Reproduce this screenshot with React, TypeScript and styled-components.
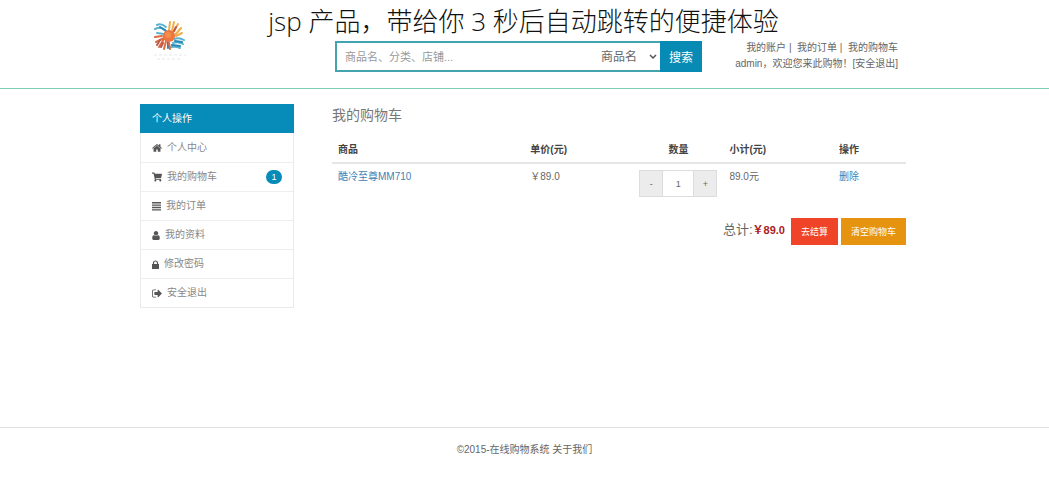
import React from 'react';
import styled, { createGlobalStyle } from 'styled-components';
import { FaShoppingCart } from 'react-icons/fa';

const GlobalStyle = createGlobalStyle`
  *, *::before, *::after { box-sizing: border-box; }
  body {
    margin: 0;
    background: #fff;
    color: #666;
    font-family: "Liberation Sans", "Noto Sans CJK SC", sans-serif;
    font-size: 10px;
    line-height: 16px;
  }
  button, input, select { font-family: inherit; border-radius: 0; margin: 0; }
`;

const Page = styled.div`
  position: relative;
  min-height: 100vh;
  display: flex;
  flex-direction: column;
`;

const Caption = styled.h1`
  position: absolute;
  top: 4px;
  left: 0;
  right: 2px;
  margin: 0;
  text-align: center;
  color: #111;
  font-family: "Open Sans", "Noto Sans CJK SC", sans-serif;
  font-size: 26px;
  font-weight: 300;
  line-height: 34px;
  pointer-events: none;
`;

const Header = styled.header`
  display: grid;
  grid-template-columns: 195px minmax(0, 367px) 1fr;
  align-items: start;
  height: 89px;
  padding: 0 151px 0 140px;
  border-bottom: 1px solid #7fcdb5;
`;

const Logo = styled.a`
  display: block;
  padding: 18px 0 0 11px;
  svg { display: block; }
`;

const SearchForm = styled.form`
  display: flex;
  height: 31px;
  margin-top: 41px;
`;

const SearchInput = styled.input`
  flex: 1;
  min-width: 0;
  padding: 0 8px;
  border: 2px solid #43a3ae;
  border-right: 0;
  color: #666;
  font-size: 11px;
  outline: 0;
  &::placeholder { color: #999; opacity: 1; }
`;

const SelectWrap = styled.label`
  position: relative;
  width: 74px;
  svg { position: absolute; right: 3px; top: 12px; pointer-events: none; }
`;

const SearchSelect = styled.select`
  appearance: none;
  width: 100%;
  height: 100%;
  padding: 1px 12px 0 15px;
  border: solid #43a3ae;
  border-width: 2px 0;
  background: #fff;
  color: #666;
  font-size: 12px;
`;

const SearchButton = styled.button`
  width: 42px;
  padding: 0;
  border: 1px solid #078bb4;
  background: #078bb4;
  color: #fff;
  font-size: 12px;
`;

const Account = styled.nav`
  padding-top: 40px;
  text-align: right;
  white-space: nowrap;
  a { color: inherit; text-decoration: none; }
`;

const Body = styled.div`
  flex: 1;
  display: grid;
  grid-template-columns: 154px minmax(0, 1fr);
  gap: 38px;
  align-items: start;
  padding: 15px 143px 24px 140px;
`;

const Menu = styled.nav`
  border: 1px solid #eaeaea;
  border-top: 0;
`;

const MenuTitle = styled.h2`
  margin: 0 -1px;
  padding: 0 12px;
  background: #078bb8;
  color: #fff;
  font-size: 10px;
  font-weight: 400;
  line-height: 29px;
`;

const MenuLink = styled.a`
  display: flex;
  align-items: center;
  gap: 5px;
  height: 29px;
  padding: 0 11px;
  color: #888;
  text-decoration: none;
  & + & { border-top: 1px solid #eee; }
  svg { flex: none; color: #555; fill: currentColor; }
`;

const Badge = styled.span`
  margin-left: auto;
  width: 16px;
  border-radius: 8px;
  background: #078bb8;
  color: #fff;
  font-size: 9px;
  line-height: 14px;
  text-align: center;
`;

const Heading = styled.h2`
  margin: 0 0 16px;
  color: #777;
  font-size: 14px;
  font-weight: 400;
  line-height: 22px;
`;

const CartTable = styled.table`
  width: 100%;
  table-layout: fixed;
  border-collapse: collapse;
`;

const HeadCell = styled.th<{ $width: string; $center?: boolean }>`
  width: ${(p) => p.$width};
  padding: 0 6px 4px;
  border-bottom: 2px solid #e6e6e6;
  color: #444;
  text-align: ${(p) => (p.$center ? 'center' : 'left')};
`;

const Cell = styled.td`
  padding: 6px 6px 0;
  vertical-align: top;
  line-height: 14px;
`;

const TextLink = styled.a`
  color: #3f7fb5;
  text-decoration: none;
`;

const Stepper = styled.div`
  display: flex;
  width: 78px;
  height: 27px;
  border: 1px solid #ddd;
`;

const StepButton = styled.button`
  width: 22px;
  padding: 0;
  border: 0;
  background: #ececec;
  color: #666;
  font-size: 9px;
`;

const StepInput = styled.input`
  flex: 1;
  min-width: 0;
  padding: 0;
  border: solid #ddd;
  border-width: 0 1px;
  color: #666;
  font-size: 9px;
  text-align: center;
`;

const Summary = styled.div`
  display: flex;
  justify-content: flex-end;
  align-items: center;
  gap: 3px;
  margin-top: 21px;
`;

const Total = styled.p`
  margin: 0 3px 3px 0;
  font-size: 13px;
  strong { color: #a8201f; font-size: 11px; }
`;

const ActionButton = styled.button<{ $color: string }>`
  height: 27px;
  padding: 0 9px;
  border: 1px solid ${(p) => p.$color};
  background: ${(p) => p.$color};
  color: #fff;
  font-size: 9px;
`;

const Footer = styled.footer`
  height: 73px;
  padding-top: 14px;
  border-top: 1px solid #e2e2e2;
  text-align: center;
  a { color: inherit; text-decoration: none; }
`;

const LogoMark = () => (
  <svg width="38" height="44" viewBox="0 0 38 44" role="img" aria-label="在线购物系统">
    <g fill="none" strokeLinecap="round" strokeWidth="2">
      <path stroke="#58b3d1" d="M6 7q4-2 9 2M4 11q6-3 10 1M6 15l7 1M23 21q5-2 10 1M22 25q5-2 10 1M20 29q5-1 9 1" />
      <path stroke="#2787b5" d="M9 9l6 4M24 23l7 1M21 27l8 1M17 24v6" />
      <path stroke="#efad4c" d="M19 4l-1 8M23 4l-2 9M27 6l-5 9M30 10l-6 7M31 15l-6 3" />
      <path stroke="#df6b43" d="M4 19l7-1M5 24l8-4M8 29l5-8M13 31l2-8M19 31l-1-6" />
      <path stroke="#b95b4d" d="M6 27l3-5M10 29l2-4M25 9l-2 4" />
    </g>
    <circle cx="18" cy="18" r="6" fill="#ee7540" />
    <circle cx="17" cy="17" r="3" fill="#f58e48" />
    <path d="M3 37h32M6 41h25" stroke="#e4eaec" strokeDasharray="3 2" />
  </svg>
);

const HomeIcon = () => (
  <svg width="10" height="10" viewBox="64 128 1664 1536" aria-hidden="true">
    <path d="M1472 992v480q0 26-19 45t-45 19h-384v-384h-256v384h-384q-26 0-45-19t-19-45v-480q0-1 .5-3t.5-3l575-474 575 474q1 2 1 6zm223-69l-62 74q-8 9-21 11h-3q-13 0-21-7l-692-577-692 577q-12 8-24 7-13-2-21-11l-62-74q-8-10-7-23.5t11-21.5l719-599q32-26 76-26t76 26l244 204v-195q0-14 9-23t23-9h192q14 0 23 9t9 23v408l219 182q10 8 11 21.5t-7 23.5z" />
  </svg>
);

const ListIcon = () => (
  <svg width="9" height="10" viewBox="0 0 9 10" aria-hidden="true">
    <path d="M0 1h9v1.400H0zM0 3.400h9v1.400H0zM0 5.800h9v1.400H0zM0 8.200h9v1.400H0z" />
  </svg>
);

const UserIcon = () => (
  <svg width="8" height="9" viewBox="256 128 1280 1536" aria-hidden="true">
    <path d="M1536 1399q0 109-62.500 187t-150.500 78h-854q-88 0-150.500-78t-62.500-187q0-85 8.500-160.500t31.500-152 58.500-131 94-89 134.500-34.500q131 128 313 128t313-128q76 0 134.500 34.500t94 89 58.500 131 31.500 152 8.500 160.500zm-256-887q0 159-112.500 271.500t-271.500 112.500-271.500-112.500-112.500-271.500 112.500-271.500 271.500-112.500 271.500 112.500 112.500 271.500z" />
  </svg>
);

const LockIcon = () => (
  <svg width="7" height="9" viewBox="0 0 7 9" aria-hidden="true">
    <path d="M0 4h7v5H0z" />
    <path d="M1.500 4.500V3a2 2 0 0 1 4 0v1.500" fill="none" stroke="currentColor" strokeWidth="1.200" />
  </svg>
);

const SignOutIcon = () => (
  <svg width="10" height="9" viewBox="64 192 1600 1408" aria-hidden="true">
    <path d="M704 1440q0 4 1 20t.5 26.500-3 23.500-10 19.500-20.500 6.500h-320q-119 0-203.500-84.500t-84.500-203.500v-704q0-119 84.500-203.500t203.500-84.500h320q13 0 22.500 9.500t9.500 22.500q0 4 1 20t.5 26.500-3 23.500-10 19.500-20.500 6.500h-320q-66 0-113 47t-47 113v704q0 66 47 113t113 47h312l11.500 1 11.500 3 8 5.500 7 9 2 13.500zm928-544q0 26-19 45l-544 544q-19 19-45 19t-45-19-19-45v-288h-448q-26 0-45-19t-19-45v-384q0-26 19-45t45-19h448v-288q0-26 19-45t45-19 45 19l544 544q19 19 19 45z" />
  </svg>
);

const menuItems = [
  { label: '个人中心', icon: <HomeIcon /> },
  { label: '我的购物车', icon: <FaShoppingCart size={10} />, count: 1 },
  { label: '我的订单', icon: <ListIcon /> },
  { label: '我的资料', icon: <UserIcon /> },
  { label: '修改密码', icon: <LockIcon /> },
  { label: '安全退出', icon: <SignOutIcon /> },
];

export default function App() {
  return (
    <>
      <GlobalStyle />
      <Page>
        <Header>
          <Logo href="#"><LogoMark /></Logo>
          <SearchForm onSubmit={(e) => e.preventDefault()}>
            <SearchInput type="text" aria-label="搜索内容" placeholder="商品名、分类、店铺..." />
            <SelectWrap>
              <SearchSelect aria-label="搜索类型">
                <option>商品名</option>
              </SearchSelect>
              <svg width="8" height="7" viewBox="0 0 8 7" aria-hidden="true">
                <path d="M1 2l3 3 3-3" fill="none" stroke="#555" strokeWidth="1.500" />
              </svg>
            </SelectWrap>
            <SearchButton type="submit">搜索</SearchButton>
          </SearchForm>
          <Account>
            <div>
              <a href="#">我的账户</a> |&nbsp; <a href="#">我的订单</a> |&nbsp; <a href="#">我的购物车</a>
            </div>
            <div>admin，欢迎您来此购物！<a href="#">[安全退出]</a></div>
          </Account>
        </Header>
        <Caption>jsp 产品，带给你 3 秒后自动跳转的便捷体验</Caption>

        <Body>
          <Menu>
            <MenuTitle>个人操作</MenuTitle>
            {menuItems.map((item) => (
              <MenuLink key={item.label} href="#">
                {item.icon}
                {item.label}
                {item.count && <Badge>{item.count}</Badge>}
              </MenuLink>
            ))}
          </Menu>

          <main>
            <Heading>我的购物车</Heading>
            <CartTable>
              <thead>
                <tr>
                  <HeadCell $width="33.5%">商品</HeadCell>
                  <HeadCell $width="19%">单价(元)</HeadCell>
                  <HeadCell $width="15.7%" $center>数量</HeadCell>
                  <HeadCell $width="19.1%">小计(元)</HeadCell>
                  <HeadCell $width="12.7%">操作</HeadCell>
                </tr>
              </thead>
              <tbody>
                <tr>
                  <Cell><TextLink href="#">酷冷至尊MM710</TextLink></Cell>
                  <Cell>￥89.0</Cell>
                  <Cell>
                    <Stepper>
                      <StepButton type="button" aria-label="减少数量">-</StepButton>
                      <StepInput type="text" aria-label="数量" defaultValue="1" />
                      <StepButton type="button" aria-label="增加数量">+</StepButton>
                    </Stepper>
                  </Cell>
                  <Cell>89.0元</Cell>
                  <Cell><TextLink href="#">删除</TextLink></Cell>
                </tr>
              </tbody>
            </CartTable>
            <Summary>
              <Total>总计:<strong>￥89.0</strong></Total>
              <ActionButton type="button" $color="#ef4427">去结算</ActionButton>
              <ActionButton type="button" $color="#e6930f">清空购物车</ActionButton>
            </Summary>
          </main>
        </Body>

        <Footer>
          ©2015-在线购物系统 <a href="#">关于我们</a>
        </Footer>
      </Page>
    </>
  );
}
